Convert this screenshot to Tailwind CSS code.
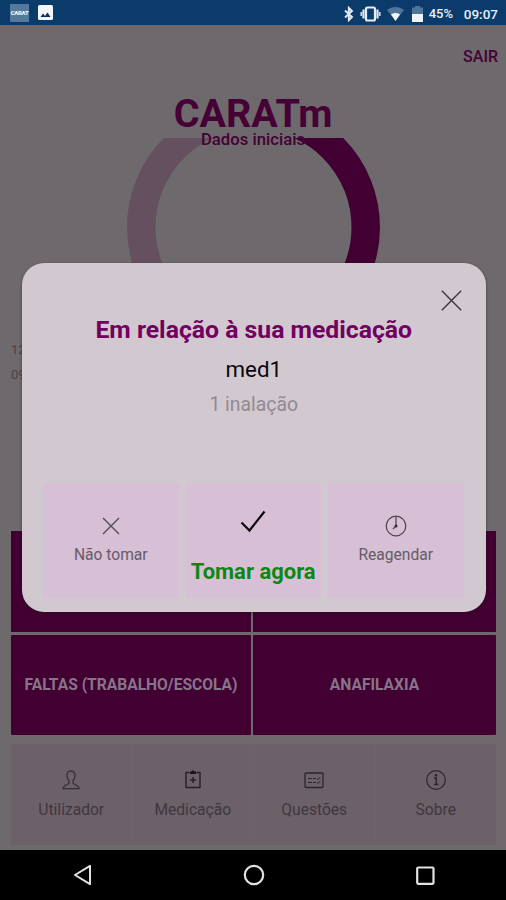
<!DOCTYPE html>
<html lang="pt">
<head>
<meta charset="utf-8">
<title>CARATm</title>
<script src="https://cdn.jsdelivr.net/npm/@tailwindcss/browser@4"></script>
</head>
<body class="bg-black">
<div class="relative flex h-[900px] w-[506px] flex-col overflow-hidden bg-[#6e696c] font-[Roboto,sans-serif]">
  <!-- Status bar -->
  <header class="flex h-[25px] shrink-0 items-center bg-[#0b3b6b] pr-2 pl-[10px] text-[#e9eef4]">
    <div class="flex h-[18px] w-[19px] items-center justify-center bg-[#537a9c] text-[6px] leading-none font-bold tracking-tighter text-white">CARAT</div>
    <svg class="ml-[9px]" width="15" height="15" viewBox="0 0 15 15"><rect width="15" height="15" rx="1.5" fill="#f4f6fa"/><path d="M2.5 12 5 8.5 7 11 9.5 7.5 12.5 12Z" fill="#0b2f60"/></svg>
    <div class="ml-auto flex items-center pt-[2px]">
      <svg width="10" height="16" viewBox="0 0 10 16" fill="none" stroke="#e4eaf1" stroke-width="1.9"><path d="M1 4.500 8 11 4.800 14.200V1.800L8 5 1 11.500"/></svg>
      <svg class="ml-[6px]" width="21" height="16" viewBox="0 0 21 16"><rect x="6" y="1.500" width="9" height="13" rx="1.500" fill="none" stroke="#e9eef4" stroke-width="2.200"/><path d="M3.500 3.500v9M17.500 3.500v9" stroke="#e0e7ef" stroke-width="2.200"/><path d="M1.300 6v4M19.700 6v4" stroke="#c9d5e2" stroke-width="1.800"/></svg>
      <svg class="ml-[6px]" width="17" height="14" viewBox="0 0 17 14"><path d="M0 3C5-1 12-1 17 3L8.500 14Z" fill="#50759a"/><path d="M4 7.500C6.500 5.500 10.500 5.500 13 7.500L8.500 14Z" fill="#f1f4f8"/></svg>
      <svg class="ml-[8px]" width="11" height="16" viewBox="0 0 11 16"><path d="M3 0h5v1.500h3V8H0V1.500h3Z" fill="#50759a"/><path d="M0 8h11v8H0Z" fill="#f1f4f8"/></svg>
      <span class="ml-[6px] w-[25px] text-[13px] leading-[18px] font-medium whitespace-nowrap">45%</span>
      <span class="ml-[10px] text-[13.500px] leading-[18px] font-medium">09:07</span>
    </div>
  </header>

  <!-- Page behind the dialog -->
  <main class="flex h-[825px] shrink-0 flex-col text-[#450035]">
    <div class="flex justify-end pt-[21px] pr-2 text-[16px] leading-[22px] font-medium"><span>SAIR</span></div>
    <h1 class="mt-[21px] text-center text-[39.500px] leading-[49px] font-bold">CARATm</h1>
    <section class="relative h-[393px] shrink-0">
      <svg class="ml-[127px] block" width="254" height="216" viewBox="0 0 254 216" fill="none" stroke-width="28.500"><path d="M126.500 201.500A112.300 112.300 0 0 1 126.500 -23.100" stroke="#65505f"/><path d="M126.500 201.500A112.300 112.300 0 0 0 126.500 -23.100" stroke="#410031"/></svg>
      <p class="absolute inset-x-0 top-[-8px] text-center text-[16.700px] leading-[20px] font-medium">Dados iniciais</p>
      <div class="absolute top-[199px] left-[11px] text-[13px] leading-[25px] text-[#474247]">12:00<br>09:07</div>
    </section>
    <section class="mx-[11px] grid h-[204px] shrink-0 grid-cols-[240px_243px] grid-rows-[100.500px_100.500px] gap-x-[2px] gap-y-[3px] text-center text-[15.600px] font-bold whitespace-nowrap text-[#86758a]">
      <div class="bg-[#410031]"></div>
      <div class="bg-[#410031]"></div>
      <div class="flex items-center justify-center rounded-[1px] bg-[#410031] pt-[2px]">FALTAS (TRABALHO/ESCOLA)</div>
      <div class="flex items-center justify-center rounded-[1px] bg-[#410031] pt-[2px]">ANAFILAXIA</div>
    </section>
    <nav class="mt-[9px] mr-[10px] ml-[11px] grid h-[101px] grid-cols-4 gap-px bg-[#6c666b] text-[15.600px] text-[#3e3740]">
      <div class="flex flex-col items-center bg-[#6c6169] pt-[25px]">
        <svg width="20" height="22" viewBox="0 0 20 22" fill="none" stroke="#352f36" stroke-width="1.300"><path d="M10 2C7 2 5.800 4 6 7c.1 2 1 3.500 2 4.800v2.400C6.500 15.500 2.500 16 2 19.700h16c-.5-3.700-4.500-4.200-6-5.500v-2.400c1-1.300 1.900-2.800 2-4.800.2-3-1-5-4-5Z"/></svg>
        <span class="mt-[9px] leading-[20px]">Utilizador</span>
      </div>
      <div class="flex flex-col items-center bg-[#6c6169] pt-[25px]">
        <svg width="20" height="22" viewBox="0 0 20 22" fill="none" stroke="#252026" stroke-width="1.400"><path d="M6.500 3.500H3v15h14v-15h-3.500"/><path d="M7 5V2.500h1.500L10 1l1.500 1.500H13V5Z" fill="#18131a" stroke="none"/><path d="M10 8v6M7 11h6"/></svg>
        <span class="mt-[9px] leading-[20px]">Medicação</span>
      </div>
      <div class="flex flex-col items-center bg-[#6c6169] pt-[25px]">
        <svg width="20" height="22" viewBox="0 0 20 22" fill="none" stroke="#2b252c" stroke-width="1.300"><rect x="1" y="4" width="18" height="14.500" rx="1"/><path d="M4 9.500h4M9 9.500h3M4 13.500h4M9 13.500h3M13 9.500l1.200 1 2-2.500M13 13.500l1.200 1 2-2.500" stroke-width="1"/></svg>
        <span class="mt-[9px] leading-[20px]">Questões</span>
      </div>
      <div class="flex flex-col items-center bg-[#6c6169] pt-[25px]">
        <svg width="20" height="22" viewBox="0 0 20 22" fill="none" stroke="#2b252c" stroke-width="1.200"><circle cx="10" cy="11" r="9.300"/><path d="M8 9h2.300v6.500M8 15.500h4.500" stroke-width="1.500"/><circle cx="10" cy="6.200" r="1.300" fill="#2b252c" stroke="none"/></svg>
        <span class="mt-[9px] leading-[20px]">Sobre</span>
      </div>
    </nav>
  </main>

  <!-- Android navigation bar -->
  <footer class="flex h-[50px] shrink-0 items-center justify-between bg-black pr-[71px] pl-[73px]">
    <svg width="19" height="22" viewBox="0 0 19 22" fill="none" stroke="#e2e2e2" stroke-width="2"><path d="M17 1.800v18.400L2 11Z" stroke-linejoin="round"/></svg>
    <svg width="22" height="22" viewBox="0 0 22 22" fill="none" stroke="#e2e2e2" stroke-width="2.200"><circle cx="11" cy="11" r="9.200"/></svg>
    <svg width="19" height="19" viewBox="0 0 19 19" fill="none" stroke="#e2e2e2" stroke-width="2.200"><rect x="1.200" y="1.500" width="16.300" height="16.300" rx="1"/></svg>
  </footer>

  <!-- Medication dialog -->
  <div role="dialog" class="absolute top-[263px] left-[22px] flex h-[348.500px] w-[463.500px] flex-col items-center rounded-[22px] bg-[#d2c8d0] shadow-[0_1px_3px_rgba(30,20,30,0.5)]">
    <svg class="mt-[27px] mr-[23.500px] self-end" width="21" height="21" viewBox="0 0 21 21" fill="none" stroke="#3c363c" stroke-width="1.400"><path d="M.8.8 20.200 20.200M20.200.8.8 20.200"/></svg>
    <h2 class="mt-[4px] text-[24.750px] leading-[30px] font-bold whitespace-nowrap text-[#720060]">Em relação à sua medicação</h2>
    <p class="mt-[9px] text-[22.300px] leading-[30px] text-[#0c070c]">med1</p>
    <p class="mt-[8px] text-[19.400px] leading-[26px] text-[#918a91]">1 inalação</p>
    <div class="mt-[65px] mr-[1px] grid h-[115px] w-[421px] grid-cols-[136px_135px_136px] justify-between text-[#655c66]">
      <button class="flex flex-col items-center bg-[#d7bfd6] pt-[34px]">
        <svg width="18" height="18" viewBox="0 0 18 18" fill="none" stroke="#514852" stroke-width="1.300"><path d="m1 1 16 16M17 1 1 17"/></svg>
        <span class="mt-[10px] text-[15.600px] leading-[20px]">Não tomar</span>
      </button>
      <button class="flex flex-col items-center bg-[#d7bfd6] pt-[27px]">
        <svg width="26" height="23" viewBox="0 0 26 23" fill="none" stroke="#0d080d" stroke-width="2.200"><path d="m1.500 12.500 8 8L24.500 1.500"/></svg>
        <span class="mt-[25px] text-[22px] leading-[28px] font-bold whitespace-nowrap text-[#0d8713]">Tomar agora</span>
      </button>
      <button class="flex flex-col items-center bg-[#d7bfd6] pt-[32px]">
        <svg width="22" height="22" viewBox="0 0 22 22" fill="none" stroke="#4b424c" stroke-width="1.200"><circle cx="11" cy="11" r="9.800"/><path d="M11 2v9l-3 3"/><circle cx="11" cy="11" r="1.500" fill="#302832" stroke="none"/></svg>
        <span class="mt-[8px] text-[15.600px] leading-[20px]">Reagendar</span>
      </button>
    </div>
  </div>
</div>
</body>
</html>
